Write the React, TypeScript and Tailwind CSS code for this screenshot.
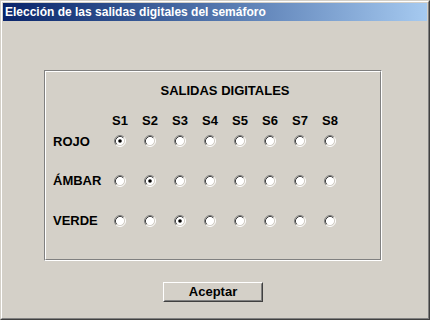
import { useState } from "react";

const rows = ["ROJO", "ÁMBAR", "VERDE"];
const outputs = ["S1", "S2", "S3", "S4", "S5", "S6", "S7", "S8"];
const rowGap = ["mt-[4px]", "mt-[23px]", "mt-[24px]"];

function Radio({ checked, onClick }: { checked: boolean; onClick: () => void }) {
  return (
    <button onClick={onClick} className="w-[12px] h-[12px] block">
      <svg width="12" height="12" viewBox="0 0 12 12">
        <circle cx="6" cy="6" r="4.5" fill="#ffffff" />
        <path d="M2.11 9.89 A5.5 5.5 0 0 1 9.89 2.11" fill="none" stroke="#808080" strokeWidth="1" />
        <path d="M9.89 2.11 A5.5 5.5 0 0 1 2.11 9.89" fill="none" stroke="#ffffff" strokeWidth="1" />
        <path d="M2.82 9.18 A4.5 4.5 0 0 1 9.18 2.82" fill="none" stroke="#404040" strokeWidth="1" />
        <path d="M9.18 2.82 A4.5 4.5 0 0 1 2.82 9.18" fill="none" stroke="#d4d0c8" strokeWidth="1" />
        {checked && <circle cx="6" cy="6" r="1.8" fill="#000000" />}
      </svg>
    </button>
  );
}

export default function App() {
  const [selected, setSelected] = useState<number[]>([0, 1, 2]);

  const pick = (row: number, col: number) => {
    const next = [...selected];
    next[row] = col;
    setSelected(next);
  };

  return (
    <div className="w-[430px] h-[320px] border border-t-[#d4d0c8] border-l-[#d4d0c8] border-b-[#404040] border-r-[#404040] font-['Liberation_Sans',Arial,sans-serif]">
      <div className="h-full border border-t-white border-l-white border-b-[#808080] border-r-[#808080] bg-[#d4d0c8] p-px flex flex-col">
        {/* title bar */}
        <div className="h-[18px] bg-gradient-to-r from-[#0a246a] to-[#a6caf0] flex items-center pl-[2px]">
          <span className="text-white text-[12px] font-bold leading-none">
            Elección de las salidas digitales del semáforo
          </span>
        </div>

        <div className="pl-[41px] pt-[49px]">
          {/* group box */}
          <div className="w-[338px] h-[191px] border border-t-[#808080] border-l-[#808080] border-b-white border-r-white">
            <div className="h-full border border-t-white border-l-white border-b-[#808080] border-r-[#808080] pl-[7px] pt-[11px]">
              <div className="grid grid-cols-[52px_repeat(8,30px)] text-[13px] font-bold text-black leading-[16px]">
                <div />
                <div className="col-span-8 text-center">SALIDAS DIGITALES</div>

                <div className="mt-[14px]" />
                {outputs.map((s) => (
                  <div key={s} className="mt-[14px] text-center">
                    {s}
                  </div>
                ))}

                {rows.map((label, r) => (
                  <div key={label} className="contents">
                    <div className={`${r === 0 ? "mt-[5px]" : rowGap[r]} h-[16px]`}>{label}</div>
                    {outputs.map((s, c) => (
                      <div key={s} className={`${rowGap[r]} h-[16px] flex items-center justify-center`}>
                        <Radio checked={selected[r] === c} onClick={() => pick(r, c)} />
                      </div>
                    ))}
                  </div>
                ))}
              </div>
            </div>
          </div>

          {/* button */}
          <div className="w-[338px] flex justify-center pt-[21px]">
            <button className="w-[100px] h-[20px] border border-t-white border-l-white border-b-[#404040] border-r-[#404040]">
              <div className="h-full border border-t-[#d4d0c8] border-l-[#d4d0c8] border-b-[#808080] border-r-[#808080] flex items-center justify-center text-[13px] font-bold text-black">
                Aceptar
              </div>
            </button>
          </div>
        </div>
      </div>
    </div>
  );
}
